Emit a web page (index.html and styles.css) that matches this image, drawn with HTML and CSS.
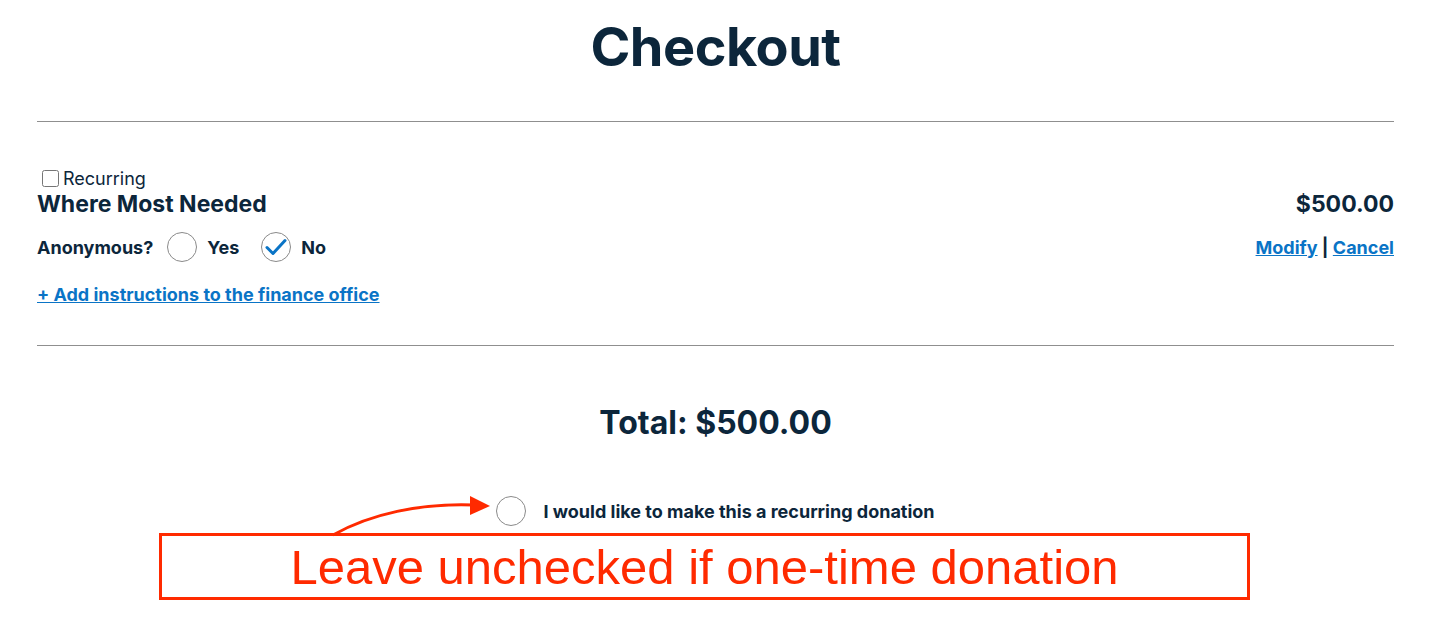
FILE: index.html
```html
<!doctype html>
<html>

<head>
	<link rel="stylesheet" href="styles.css">
</head>

<body>
	<div class="page">
		<h1 class="title">Checkout</h1>
		<hr class="rule">

		<div class="item">
			<label class="recurring"><input type="checkbox" class="box"> Recurring</label>
			<div class="item-row">
				<div class="fund">Where Most Needed</div>
				<div class="amount">$500.00</div>
			</div>
			<div class="item-row anon-row">
				<div class="anon">
					<span class="anon-label">Anonymous?</span>
					<span class="circle"></span>
					<span class="opt">Yes</span>
					<span class="circle checked">
						<svg width="22" height="18" viewBox="0 0 22 18">
							<path d="M2 9.5 L8 15.5 L20 2.5" fill="none" stroke="#0a74c6" stroke-width="3" stroke-linecap="round" stroke-linejoin="round" />
						</svg>
					</span>
					<span class="opt">No</span>
				</div>
				<div class="actions"><a href="#">Modify</a> | <a href="#">Cancel</a></div>
			</div>
			<a href="#" class="instructions">+ Add instructions to the finance office</a>
		</div>
		<hr class="rule">

		<div class="total">Total: $500.00</div>

		<div class="donation">
			<div class="donation-row">
				<span class="circle"></span>
				<span class="donation-text">I would like to make this a recurring donation</span>
			</div>
			<svg class="arrow" width="210" height="44" viewBox="0 0 210 44">
				<path d="M6 41 C 43 20, 93 9, 147 11" fill="none" stroke="#ff2a00" stroke-width="3" />
				<path d="M143 2 L163 12 L143 21 Z" fill="#ff2a00" />
			</svg>
			<div class="note">Leave unchecked if one-time donation</div>
		</div>
	</div>
</body>

</html>
```

FILE: styles.css
```css
body {
	margin: 0;
	background: #fff;
	font-family: Inter, "Noto Sans", sans-serif;
	color: #0c263b;
}

.page {
	padding: 0 35px 0 37px;
}

.title {
	margin: 0;
	padding-top: 14px;
	height: 121px;
	box-sizing: border-box;
	text-align: center;
	font-size: 54px;
	font-weight: 700;
	letter-spacing: -0.5px;
}

.rule {
	margin: 0;
	border: none;
	border-top: 1px solid #8f8f8f;
}

.item {
	padding: 44px 0 40px;
}

.recurring {
	display: flex;
	align-items: center;
	font-size: 18px;
	height: 24px;
	margin-left: 5px;
}

.box {
	width: 17px;
	height: 17px;
	margin: 0 4px 0 0;
}

.item-row {
	display: flex;
	justify-content: space-between;
	align-items: center;
}

.anon-row {
	margin-top: 3px;
}

.fund,
.amount {
	font-size: 23px;
	font-weight: 700;
	height: 28px;
	line-height: 28px;
}

.anon {
	display: flex;
	align-items: center;
	height: 52px;
	font-size: 18px;
	font-weight: 700;
}

.anon-label {
	margin-right: 14px;
}

.circle {
	width: 28px;
	height: 28px;
	border: 1.5px solid #8a8a8a;
	border-radius: 50%;
	display: inline-flex;
	justify-content: center;
	align-items: center;
	flex: none;
}

.opt {
	margin: 0 22px 0 10px;
}

.actions {
	font-size: 18px;
	font-weight: 700;
}

a {
	color: #0a74c6;
}

.instructions {
	display: inline-block;
	margin-top: 11px;
	font-size: 18px;
	font-weight: 700;
}

.total {
	text-align: center;
	font-size: 32px;
	font-weight: 700;
	padding-top: 57px;
	height: 143px;
	box-sizing: border-box;
}

.donation {
	position: relative;
	display: flex;
	flex-direction: column;
	align-items: center;
}

.donation-row {
	display: flex;
	align-items: center;
	gap: 17px;
	height: 44px;
}

.donation-text {
	font-size: 18px;
	font-weight: 700;
}

.arrow {
	position: absolute;
	left: 290px;
	top: 5px;
}

.note {
	width: 1091px;
	height: 67px;
	box-sizing: border-box;
	border: 3px solid #ff2a00;
	color: #ff2a00;
	font-family: "Liberation Sans", Arial, sans-serif;
	font-size: 49px;
	line-height: 62px;
	text-align: center;
	margin-right: 22px;
}
```
